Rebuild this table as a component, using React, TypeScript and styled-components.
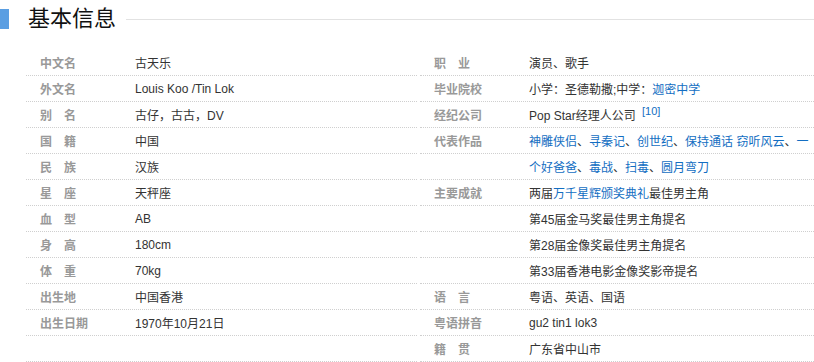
import React from "react";
import styled, { createGlobalStyle } from "styled-components";

const Global = createGlobalStyle`
  html, body { margin: 0; padding: 0; background: #fff; }
  body { font-family: Arial, "Liberation Sans", "Noto Sans CJK SC", sans-serif; }
`;

const Page = styled.div`
  width: 814px;
  height: 362px;
  overflow: hidden;
  background: #fff;
`;

const TitleBar = styled.div`
  display: flex;
  align-items: center;
  height: 36px;
  padding-top: 1px;
`;

const Accent = styled.span`
  width: 9px;
  height: 20px;
  background: #5a9ee2;
`;

const Title = styled.h2`
  margin: 0 0 0 19px;
  font-size: 22px;
  font-weight: normal;
  color: #111;
  font-family: Arial, "Liberation Sans", "Noto Sans CJK SC", sans-serif;
  line-height: 26px;
`;

const TitleRule = styled.span`
  flex: 1;
  height: 1px;
  margin-left: 10px;
  background: #e2e2e2;
`;

const Body = styled.div`
  display: grid;
  grid-template-columns: 391px 394px;
  column-gap: 3px;
  padding-left: 26px;
  margin-top: 13px;
`;

const Column = styled.div`
  display: flex;
  flex-direction: column;
`;

const Row = styled.div`
  display: flex;
  align-items: center;
  height: 25px;
  border-bottom: 1px dotted #cfcfcf;
  font-size: 12px;
`;

const Label = styled.div`
  box-sizing: border-box;
  width: 109px;
  padding-left: 14px;
  flex: none;
  color: #999;
  font-weight: bold;
  white-space: pre;
`;

const Value = styled.div`
  color: #333;
  white-space: nowrap;
`;

const Link = styled.a`
  color: #136ec2;
  text-decoration: none;
`;

const Sup = styled.sup`
  color: #136ec2;
  font-size: 11px;
  margin-left: 3px;
  vertical-align: 5px;
  line-height: 0;
`;

type Item = { label: string; value: React.ReactNode };

const left: Item[] = [
  { label: "中文名", value: "古天乐" },
  { label: "外文名", value: "Louis Koo /Tin Lok" },
  { label: "别\u3000名", value: "古仔，古古，DV" },
  { label: "国\u3000籍", value: "中国" },
  { label: "民\u3000族", value: "汉族" },
  { label: "星\u3000座", value: "天秤座" },
  { label: "血\u3000型", value: "AB" },
  { label: "身\u3000高", value: "180cm" },
  { label: "体\u3000重", value: "70kg" },
  { label: "出生地", value: "中国香港" },
  { label: "出生日期", value: "1970年10月21日" },
  { label: "", value: "" },
];

const right: Item[] = [
  { label: "职\u3000业", value: "演员、歌手" },
  {
    label: "毕业院校",
    value: (
      <>
        小学：圣德勒撒;中学：<Link href="#">迦密中学</Link>
      </>
    ),
  },
  {
    label: "经纪公司",
    value: (
      <>
        Pop Star经理人公司 <Sup>[10]</Sup>
      </>
    ),
  },
  {
    label: "代表作品",
    value: (
      <>
        <Link href="#">神雕侠侣</Link>、<Link href="#">寻秦记</Link>、
        <Link href="#">创世纪</Link>、<Link href="#">保持通话</Link>{" "}
        <Link href="#">窃听风云</Link>、<Link href="#">一</Link>
      </>
    ),
  },
  {
    label: "",
    value: (
      <>
        <Link href="#">个好爸爸</Link>、<Link href="#">毒战</Link>、
        <Link href="#">扫毒</Link>、<Link href="#">圆月弯刀</Link>
      </>
    ),
  },
  {
    label: "主要成就",
    value: (
      <>
        两届<Link href="#">万千星辉颁奖典礼</Link>最佳男主角
      </>
    ),
  },
  { label: "", value: "第45届金马奖最佳男主角提名" },
  { label: "", value: "第28届金像奖最佳男主角提名" },
  { label: "", value: "第33届香港电影金像奖影帝提名" },
  { label: "语\u3000言", value: "粤语、英语、国语" },
  { label: "粤语拼音", value: "gu2 tin1 lok3" },
  { label: "籍\u3000贯", value: "广东省中山市" },
];

const InfoColumn = ({ items }: { items: Item[] }) => (
  <Column>
    {items.map((it, i) => (
      <Row key={i}>
        <Label>{it.label}</Label>
        <Value>{it.value}</Value>
      </Row>
    ))}
  </Column>
);

export default function App() {
  return (
    <Page>
      <Global />
      <TitleBar>
        <Accent />
        <Title>基本信息</Title>
        <TitleRule />
      </TitleBar>
      <Body>
        <InfoColumn items={left} />
        <InfoColumn items={right} />
      </Body>
    </Page>
  );
}
